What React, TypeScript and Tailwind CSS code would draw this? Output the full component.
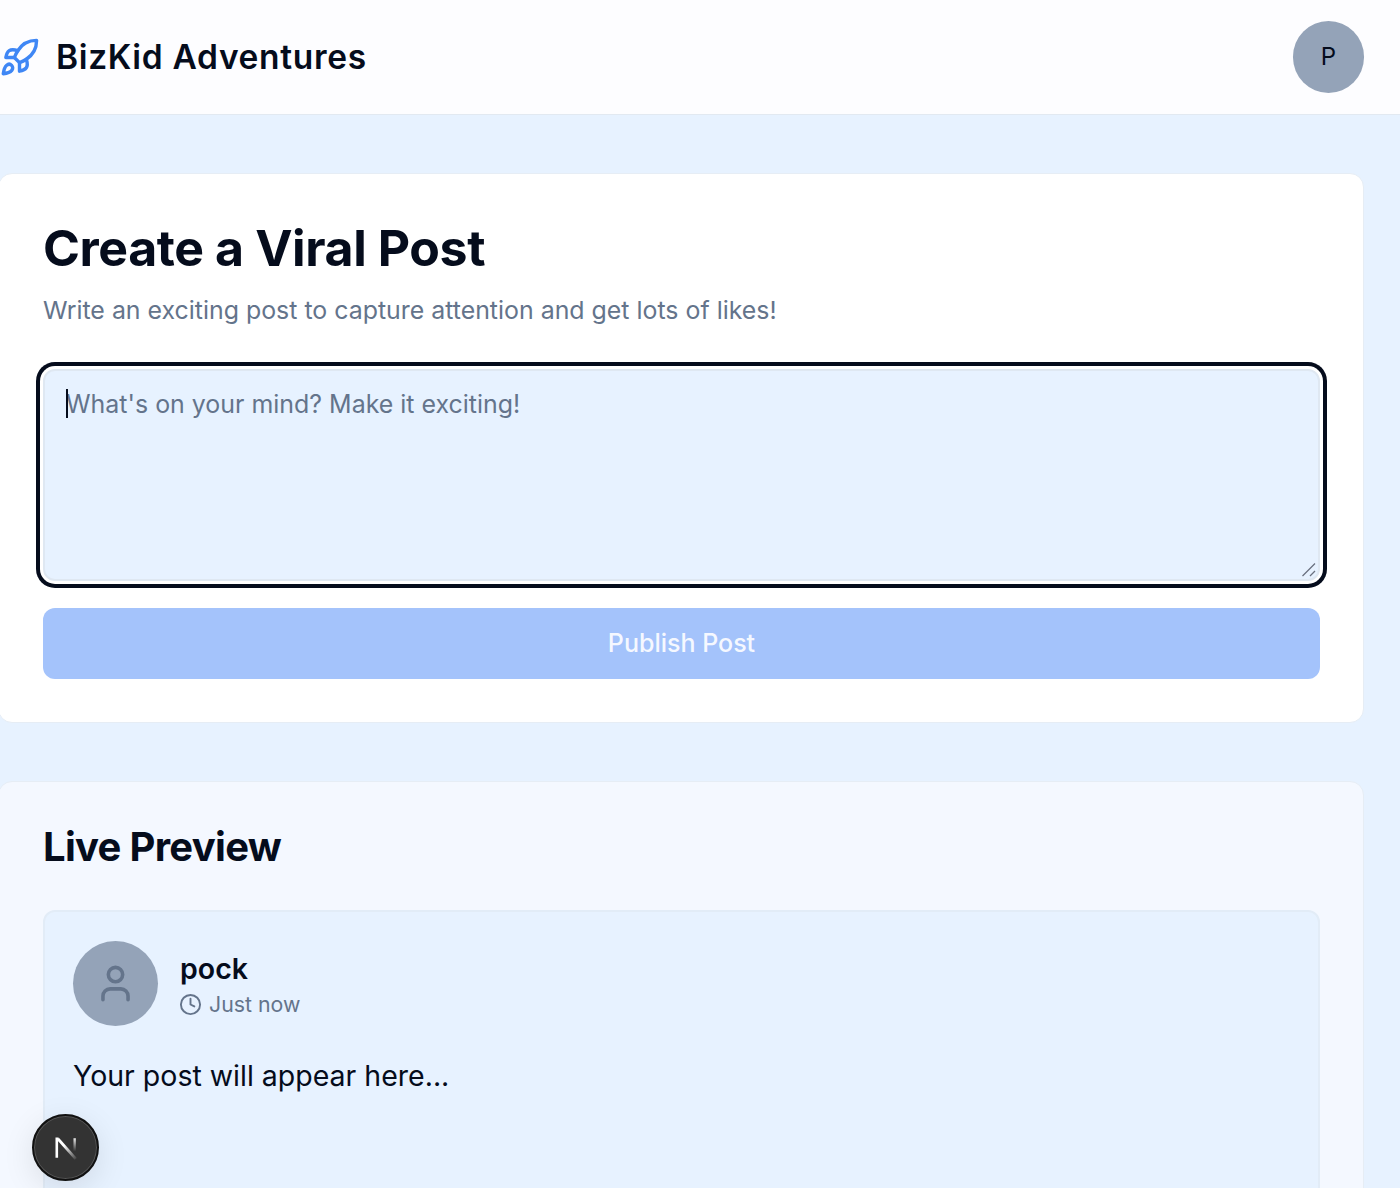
import { Clock, Rocket, User } from "lucide-react";

function NextBadge() {
  return (
    <button className="fixed bottom-[7px] left-[32px] flex h-[67px] w-[67px] items-center justify-center rounded-full border-2 border-[#111] bg-[#333] shadow-[0_0_0_1px_#555_inset,0_8px_32px_rgba(0,0,0,0.1)]">
      <svg viewBox="0 0 24 24" className="h-[26px] w-[26px]" fill="none">
        <defs>
          <linearGradient id="nfade" gradientUnits="userSpaceOnUse" x1="10" y1="10" x2="21" y2="22">
            <stop offset="0" stopColor="#fff" />
            <stop offset="1" stopColor="#fff" stopOpacity="0.1" />
          </linearGradient>
          <linearGradient id="nbar" gradientUnits="userSpaceOnUse" x1="20" y1="3" x2="20" y2="15">
            <stop offset="0" stopColor="#fff" stopOpacity="0.9" />
            <stop offset="1" stopColor="#fff" stopOpacity="0" />
          </linearGradient>
        </defs>
        <path d="M3.5 21V3.5h1.6" stroke="#fff" strokeWidth="2.4" />
        <path d="M4.5 3.5L21 22" stroke="url(#nfade)" strokeWidth="2.6" />
        <path d="M20 3v13" stroke="url(#nbar)" strokeWidth="2.2" />
      </svg>
    </button>
  );
}

export default function App() {
  return (
    <div
      className="h-[1188px] overflow-hidden bg-[#e7f2ff] text-[#050c1c]"
      style={{ fontFamily: "Inter, 'Noto Sans', sans-serif" }}
    >
      <header className="flex h-[115px] items-center justify-between border-b border-[#e2e9f1] bg-[#fdfdff] pr-[36px]">
        <div className="flex items-center gap-[15px]">
          <Rocket className="h-[41px] w-[41px] -translate-x-[1px] text-[#3f87f5]" strokeWidth={2} />
          <span className="text-[33.5px] font-semibold tracking-[0.67px]">BizKid Adventures</span>
        </div>
        <div className="flex h-[72px] w-[71px] items-center justify-center rounded-full bg-[#94a3b8] text-[24px]">
          P
        </div>
      </header>

      <main className="flex flex-col gap-[58px] pr-[36px] pt-[58px]">
        <section className="-ml-[2px] rounded-[14px] border border-[#e6edf5] bg-white pb-[43px] pl-[44px] pr-[43px] pt-[42px]">
          <h1 className="text-[50px] font-bold leading-[64px] tracking-[-0.4px]">Create a Viral Post</h1>
          <p className="mt-[12px] text-[24.9px] leading-[36px] text-[#64748b]">
            Write an exciting post to capture attention and get lots of likes!
          </p>
          <div className="relative mt-[41px]">
            <textarea
              placeholder="What's on your mind? Make it exciting!"
              className="block h-[212px] w-full resize-none rounded-[12px] border-2 border-[#dfe8f2] bg-[#e7f2ff] px-[21px] py-[15px] text-[24.95px] leading-[36px] outline-none shadow-[0_0_0_3px_#fff,0_0_0_7px_#050c1c] placeholder:text-[#64748b]"
            />
            <span className="absolute left-[23px] top-[20px] h-[29px] w-[2px] bg-[#050c1c]" />
            <svg viewBox="0 0 16 16" className="absolute bottom-[3px] right-[3px] h-[16px] w-[16px]" fill="none">
              <path d="M1.5 14L14 1.5M9 14l5-5" stroke="#6b7280" strokeWidth="1.3" />
            </svg>
          </div>
          <button className="mt-[27px] flex h-[71px] w-full items-center justify-center rounded-[12px] bg-[#a4c3fb] pt-[1px] text-[25px] font-medium text-[#f5f8ff]">
            Publish Post
          </button>
        </section>

        <section className="-ml-[2px] rounded-t-[14px] border border-[#e6edf5] bg-[#f4f8ff] pl-[44px] pr-[43px] pt-[37px]">
          <h2 className="text-[40px] font-bold leading-[56px] tracking-[-0.7px]">Live Preview</h2>
          <div className="mt-[35px] rounded-t-[12px] border-2 border-[#e2ecf7] bg-[#e7f2ff] px-[28px] pb-[120px] pt-[29px]">
            <div className="flex items-center gap-[22px]">
              <div className="flex h-[85px] w-[85px] items-center justify-center rounded-full bg-[#94a3b8]">
                <User className="h-[43px] w-[43px] text-[#64748b]" strokeWidth={2} />
              </div>
              <div className="pt-[6px]">
                <div className="text-[28.5px] font-semibold leading-[32px]">pock</div>
                <div className="mt-[3px] flex items-center gap-[7px] text-[21.3px] leading-[32px] text-[#64748b]">
                  <Clock className="-ml-[1px] h-[23px] w-[23px]" strokeWidth={2} />
                  <span>Just now</span>
                </div>
              </div>
            </div>
            <p className="mt-[28px] text-[28.5px] leading-[44px]">Your post will appear here...</p>
          </div>
        </section>
      </main>

      <NextBadge />
    </div>
  );
}
